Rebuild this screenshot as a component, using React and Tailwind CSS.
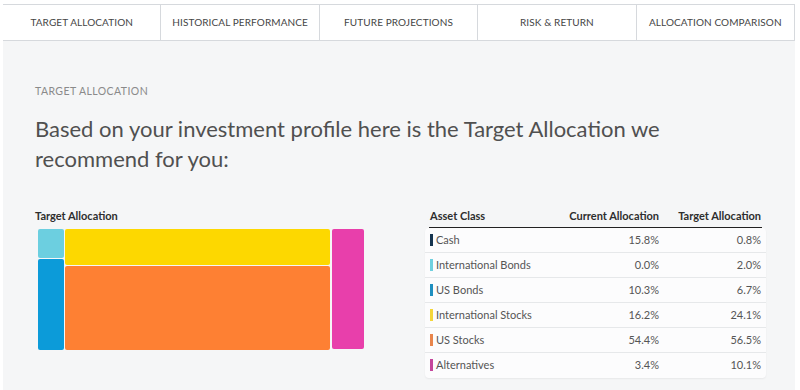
import React from "react";

const tabs = [
  "TARGET ALLOCATION",
  "HISTORICAL PERFORMANCE",
  "FUTURE PROJECTIONS",
  "RISK & RETURN",
  "ALLOCATION COMPARISON",
];

const rows = [
  { name: "Cash", color: "bg-[#15344f]", current: "15.8%", target: "0.8%" },
  { name: "International Bonds", color: "bg-[#6fd0df]", current: "0.0%", target: "2.0%" },
  { name: "US Bonds", color: "bg-[#1f8fbf]", current: "10.3%", target: "6.7%" },
  { name: "International Stocks", color: "bg-[#f4d63a]", current: "16.2%", target: "24.1%" },
  { name: "US Stocks", color: "bg-[#e8854c]", current: "54.4%", target: "56.5%" },
  { name: "Alternatives", color: "bg-[#c4469c]", current: "3.4%", target: "10.1%" },
];

const Treemap = () => {
  return (
    <div className="ml-[3px] mt-[6px] flex h-[121px] gap-[1px]">
      <div className="flex w-[26px] flex-col gap-[1px]">
        <div className="h-[29px] rounded-[2px] bg-[#6ccfe0]" />
        <div className="flex-1 rounded-[2px] bg-[#0c9bd9]" />
      </div>
      <div className="flex w-[265px] flex-col gap-[1px]">
        <div className="h-[36px] rounded-[2px] bg-[#fdd800]" />
        <div className="flex-1 rounded-[2px] bg-[#fe8033]" />
      </div>
      <div className="ml-[1px] h-[120px] w-[32px] rounded-[2px] bg-[#e83fab]" />
    </div>
  );
};

export default function App() {
  return (
    <div className="h-[390px] w-[800px] overflow-hidden bg-white pt-[4px] font-['Lato',sans-serif]">
      <div className="ml-[3px] mr-[5px] flex h-[37px] border border-l-0 border-[#d6d9dd] bg-white">
        {tabs.map((t, i) => (
          <div
            key={t}
            className={
              "flex flex-1 items-center justify-center text-[10px] tracking-[0.01em] text-[#454545] " +
              (i > 0 ? "border-l border-[#d6d9dd]" : "")
            }
          >
            {t}
          </div>
        ))}
      </div>
      <div className="ml-[3px] mr-[5px] h-full bg-[#f5f6f7] pl-[32px] pr-[29px] pt-[43px]">
        <div className="text-[10.5px] tracking-[0.04em] text-[#8a8a8a]">TARGET ALLOCATION</div>
        <h1 className="mt-[14px] w-[680px] text-[22px] leading-[30px] font-normal text-[#505050]">
          Based on your investment profile here is the Target Allocation we recommend for you:
        </h1>
        <div className="mt-[35px] flex">
          <div className="w-[330px]">
            <div className="text-[11px] font-bold leading-[14px] text-[#2e2e2e]">Target Allocation</div>
            <Treemap />
          </div>
          <div className="ml-auto w-[341px]">
            <div className="flex px-[5px] text-[11px] font-bold leading-[14px] text-[#2e2e2e]">
              <div className="flex-1">Asset Class</div>
              <div className="w-[120px] text-right">Current Allocation</div>
              <div className="w-[102px] text-right">Target Allocation</div>
            </div>
            <div className="mx-[4px] mt-[4px] border-t-[1.5px] border-[#222]" />
            <div className="rounded-[4px] bg-[#fcfcfd] shadow-[0_1px_2px_rgba(0,0,0,0.06)]">
              {rows.map((r, i) => (
                <div
                  key={r.name}
                  className={
                    "flex h-[25px] items-center px-[5px] text-[11px] text-[#555] " +
                    (i < rows.length - 1 ? "border-b border-[#e6e8ea]" : "")
                  }
                >
                  <div className="flex flex-1 items-center">
                    <span className={"mr-[3px] h-[12px] w-[3px] " + r.color} />
                    {r.name}
                  </div>
                  <div className="w-[120px] text-right">{r.current}</div>
                  <div className="w-[102px] text-right">{r.target}</div>
                </div>
              ))}
            </div>
          </div>
        </div>
      </div>
    </div>
  );
}
